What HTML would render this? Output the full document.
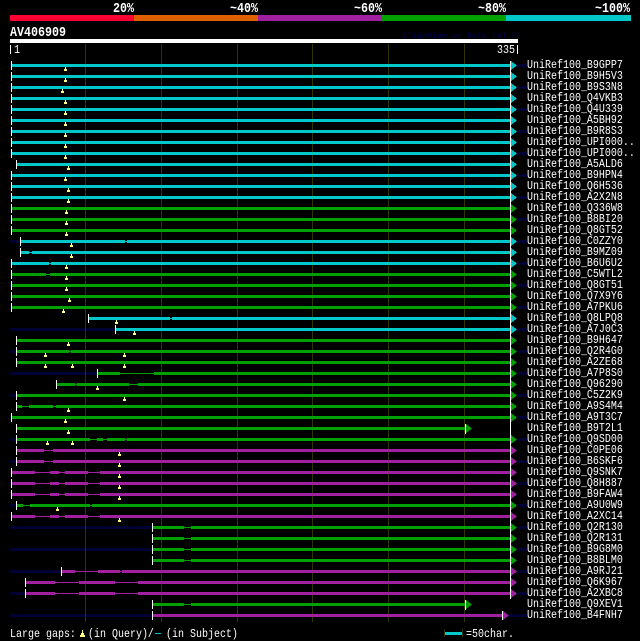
<!DOCTYPE html>
<html><head><meta charset="utf-8"><style>
html,body{margin:0;padding:0;background:#000;width:640px;height:641px;overflow:hidden}
svg{display:block}
text{font-family:"Liberation Mono",monospace;fill:#fff;white-space:pre}
.l{font-size:10px}
.h{font-size:11.67px;font-weight:bold;text-anchor:end}
path{fill:none}
.t{shape-rendering:crispEdges}
rect{shape-rendering:crispEdges}
</style></head><body>
<svg xmlns="http://www.w3.org/2000/svg" width="640" height="641" viewBox="0 0 640 641">
<defs><path id="m" style="fill:#ffff80;stroke:none" d="M-1 5h3v2h-3zM0 3h1v2h-1z"/></defs>
<rect width="640" height="641" fill="#000"/>
<rect x="10" y="15" width="124" height="6" fill="#ff0033"/>
<rect x="134" y="15" width="124" height="6" fill="#e06000"/>
<rect x="258" y="15" width="124" height="6" fill="#a020a0"/>
<rect x="382" y="15" width="124" height="6" fill="#00a000"/>
<rect x="506" y="15" width="125" height="6" fill="#00c8c8"/>
<text class="h" transform="translate(134 12) scale(1 1.17)">20%</text>
<text class="h" transform="translate(258 12) scale(1 1.17)">~40%</text>
<text class="h" transform="translate(382 12) scale(1 1.17)">~60%</text>
<text class="h" transform="translate(506 12) scale(1 1.17)">~80%</text>
<text class="h" transform="translate(630 12) scale(1 1.17)">~100%</text>
<text transform="translate(10 36) scale(1 1.17)" style="font-size:11.67px;font-weight:bold">AV406909</text>
<text x="402" y="38" style="font-size:8.33px;font-weight:bold;fill:#000040">AlignView.pm Beta rel.7</text>
<rect x="10" y="39" width="508" height="4" fill="#fff"/>
<rect x="10" y="45" width="1" height="9" fill="#fff"/>
<rect x="517" y="45" width="1" height="9" fill="#fff"/>
<text class="l" transform="translate(14 53) scale(1 1.2)">1</text>
<text class="l" transform="translate(497 53) scale(1 1.2)">335</text>
<path stroke="#000033" stroke-width="3" d="M10 65.5H11M517 65.500H527M10 87.500H11M517 87.500H527M10 109.500H11M517 109.500H527M10 131.500H11M517 131.500H527M10 153.500H11M517 153.500H527M10 175.500H11M517 175.500H527M10 197.500H11M517 197.500H527M10 219.500H11M517 219.500H527M10 241.500H20M517 241.500H527M10 263.500H11M517 263.500H527M10 285.500H11M517 285.500H527M10 307.500H11M517 307.500H527M10 329.500H115M517 329.500H527M10 351.500H16M517 351.500H527M10 373.500H97M517 373.500H527M10 395.500H16M517 395.500H527M10 417.500H11M517 417.500H527M10 439.500H16M517 439.500H527M10 461.500H16M517 461.500H527M10 483.500H11M517 483.500H527M10 505.500H16M517 505.500H527M10 527.500H152M517 527.500H527M10 549.500H152M517 549.500H527M10 571.500H61M517 571.500H527M10 593.500H25M517 593.500H527M10 615.500H152M508 615.500H527"/>
<path stroke="#333300" stroke-width="1" d="M85.5 44V622M161.5 44V622M237.5 44V622M312.5 44V622M388.5 44V622M464.5 44V622"/>
<path stroke="#00c8c8" stroke-width="3" d="M12 65.5H511M12 76.5H511M12 87.5H511M12 98.5H511M12 109.5H511M12 120.5H511M12 131.5H511M12 142.5H511M12 153.5H511M17 164.5H511M12 175.5H511M12 186.5H511M12 197.5H511M21 241.5H125M127 241.5H511M21 252.5H29M32 252.5H511M12 263.5H49M51 263.5H511M89 318.5H170M172 318.5H511M116 329.5H511"/>
<path stroke="#00c8c8" stroke-width="1" d="M125 241.5H127M29 252.5H32M49 263.5H51M170 318.5H172"/>
<path stroke="#00a000" stroke-width="3" d="M12 208.5H511M12 219.5H511M12 230.5H511M12 274.5H46M50 274.5H511M12 285.5H511M12 296.5H511M12 307.5H511M17 340.5H511M17 351.5H69M71 351.5H511M17 362.5H511M98 373.5H120M154 373.5H511M57 384.5H75M77 384.5H129M138 384.5H511M17 395.5H511M17 406.5H22M29 406.5H53M56 406.5H511M12 417.5H511M17 428.5H466M17 439.5H90M97 439.5H103M107 439.5H125M127 439.5H511M17 505.5H23M30 505.5H90M92 505.5H511M153 527.5H184M191 527.5H511M153 538.5H184M191 538.5H511M153 549.5H184M191 549.5H511M153 560.5H184M191 560.5H511M153 604.5H184M191 604.5H466"/>
<path stroke="#00a000" stroke-width="1" d="M46 274.5H50M69 351.5H71M120 373.5H154M75 384.5H77M129 384.5H138M22 406.5H29M53 406.5H56M90 439.5H97M103 439.5H107M125 439.5H127M23 505.5H30M90 505.5H92M184 527.5H191M184 538.5H191M184 549.5H191M184 560.5H191M184 604.5H191"/>
<path stroke="#a020a0" stroke-width="3" d="M17 450.5H44M53 450.5H511M17 461.5H44M53 461.5H511M12 472.5H35M50 472.5H59M65 472.5H88M100 472.5H511M12 483.5H35M50 483.5H59M65 483.5H88M100 483.5H511M12 494.5H35M50 494.5H59M65 494.5H88M100 494.5H511M12 516.5H35M50 516.5H59M65 516.5H88M100 516.5H511M62 571.5H75M98 571.5H120M122 571.5H511M26 582.5H55M79 582.5H115M138 582.5H511M26 593.5H55M79 593.5H115M138 593.5H511M153 615.5H502"/>
<path stroke="#a020a0" stroke-width="1" d="M44 450.5H53M44 461.5H53M35 472.5H50M59 472.5H65M88 472.5H100M35 483.5H50M59 483.5H65M88 483.5H100M35 494.5H50M59 494.5H65M88 494.5H100M35 516.5H50M59 516.5H65M88 516.5H100M75 571.5H98M120 571.5H122M55 582.5H79M115 582.5H138M55 593.5H79M115 593.5H138"/>
<path stroke="#fff" stroke-width="1" d="M11.5 61v9M11.5 72v9M11.5 83v9M11.5 94v9M11.5 105v9M11.5 116v9M11.5 127v9M11.5 138v9M11.5 149v9M16.5 160v9M11.5 171v9M11.5 182v9M11.5 193v9M11.5 204v9M11.5 215v9M11.5 226v9M20.5 237v9M20.5 248v9M11.5 259v9M11.5 270v9M11.5 281v9M11.5 292v9M11.5 303v9M88.5 314v9M115.5 325v9M16.5 336v9M16.5 347v9M16.5 358v9M97.5 369v9M56.5 380v9M16.5 391v9M16.5 402v9M11.5 413v9M16.5 424v9M16.5 435v9M16.5 446v9M16.5 457v9M11.5 468v9M11.5 479v9M11.5 490v9M16.5 501v9M11.5 512v9M152.5 523v9M152.5 534v9M152.5 545v9M152.5 556v9M61.5 567v9M25.5 578v9M25.5 589v9M152.5 600v9M152.5 611v9M510.5 61V599M465.5 424v10M465.5 600v10M502.5 611v9"/>
<path class="t" style="fill:#00c8c8" d="M511 61l6 4.500-6 4.500zM511 72l6 4.500-6 4.500zM511 83l6 4.500-6 4.500zM511 94l6 4.500-6 4.500zM511 105l6 4.500-6 4.500zM511 116l6 4.500-6 4.500zM511 127l6 4.500-6 4.500zM511 138l6 4.500-6 4.500zM511 149l6 4.500-6 4.500zM511 160l6 4.500-6 4.500zM511 171l6 4.500-6 4.500zM511 182l6 4.500-6 4.500zM511 193l6 4.500-6 4.500zM511 237l6 4.500-6 4.500zM511 248l6 4.500-6 4.500zM511 259l6 4.500-6 4.500zM511 314l6 4.500-6 4.500zM511 325l6 4.500-6 4.500z"/>
<path class="t" style="fill:#00a000" d="M511 204l6 4.500-6 4.500zM511 215l6 4.500-6 4.500zM511 226l6 4.500-6 4.500zM511 270l6 4.500-6 4.500zM511 281l6 4.500-6 4.500zM511 292l6 4.500-6 4.500zM511 303l6 4.500-6 4.500zM511 336l6 4.500-6 4.500zM511 347l6 4.500-6 4.500zM511 358l6 4.500-6 4.500zM511 369l6 4.500-6 4.500zM511 380l6 4.500-6 4.500zM511 391l6 4.500-6 4.500zM511 402l6 4.500-6 4.500zM511 413l6 4.500-6 4.500zM466 424l6 4.500-6 4.500zM511 435l6 4.500-6 4.500zM511 501l6 4.500-6 4.500zM511 523l6 4.500-6 4.500zM511 534l6 4.500-6 4.500zM511 545l6 4.500-6 4.500zM511 556l6 4.500-6 4.500zM466 600l6 4.500-6 4.500z"/>
<path class="t" style="fill:#a020a0" d="M511 446l6 4.500-6 4.500zM511 457l6 4.500-6 4.500zM511 468l6 4.500-6 4.500zM511 479l6 4.500-6 4.500zM511 490l6 4.500-6 4.500zM511 512l6 4.500-6 4.500zM511 567l6 4.500-6 4.500zM511 578l6 4.500-6 4.500zM511 589l6 4.500-6 4.500zM503 611l6 4.500-6 4.500z"/>
<use href="#m" x="65" y="64"/><use href="#m" x="65" y="75"/><use href="#m" x="62" y="86"/><use href="#m" x="65" y="97"/><use href="#m" x="65" y="108"/><use href="#m" x="65" y="119"/><use href="#m" x="65" y="130"/><use href="#m" x="65" y="141"/><use href="#m" x="65" y="152"/><use href="#m" x="68" y="163"/><use href="#m" x="65" y="174"/><use href="#m" x="68" y="185"/><use href="#m" x="68" y="196"/><use href="#m" x="66" y="207"/><use href="#m" x="66" y="218"/><use href="#m" x="66" y="229"/><use href="#m" x="71" y="240"/><use href="#m" x="71" y="251"/><use href="#m" x="66" y="262"/><use href="#m" x="66" y="273"/><use href="#m" x="66" y="284"/><use href="#m" x="69" y="295"/><use href="#m" x="63" y="306"/><use href="#m" x="116" y="317"/><use href="#m" x="134" y="328"/><use href="#m" x="68" y="339"/><use href="#m" x="45" y="350"/><use href="#m" x="124" y="350"/><use href="#m" x="45" y="361"/><use href="#m" x="72" y="361"/><use href="#m" x="124" y="361"/><use href="#m" x="97" y="383"/><use href="#m" x="124" y="394"/><use href="#m" x="68" y="405"/><use href="#m" x="65" y="416"/><use href="#m" x="68" y="427"/><use href="#m" x="47" y="438"/><use href="#m" x="72" y="438"/><use href="#m" x="119" y="449"/><use href="#m" x="119" y="460"/><use href="#m" x="119" y="471"/><use href="#m" x="119" y="482"/><use href="#m" x="119" y="493"/><use href="#m" x="57" y="504"/><use href="#m" x="119" y="515"/>
<text class="l" transform="translate(527 68) scale(1 1.2)">UniRef100_B9GPP7</text>
<text class="l" transform="translate(527 79) scale(1 1.2)">UniRef100_B9H5V3</text>
<text class="l" transform="translate(527 90) scale(1 1.2)">UniRef100_B9S3N8</text>
<text class="l" transform="translate(527 101) scale(1 1.2)">UniRef100_Q4VKB3</text>
<text class="l" transform="translate(527 112) scale(1 1.2)">UniRef100_Q4U339</text>
<text class="l" transform="translate(527 123) scale(1 1.2)">UniRef100_A5BH92</text>
<text class="l" transform="translate(527 134) scale(1 1.2)">UniRef100_B9R8S3</text>
<text class="l" transform="translate(527 145) scale(1 1.2)">UniRef100_UPI000..</text>
<text class="l" transform="translate(527 156) scale(1 1.2)">UniRef100_UPI000..</text>
<text class="l" transform="translate(527 167) scale(1 1.2)">UniRef100_A5ALD6</text>
<text class="l" transform="translate(527 178) scale(1 1.2)">UniRef100_B9HPN4</text>
<text class="l" transform="translate(527 189) scale(1 1.2)">UniRef100_Q6H536</text>
<text class="l" transform="translate(527 200) scale(1 1.2)">UniRef100_A2X2N8</text>
<text class="l" transform="translate(527 211) scale(1 1.2)">UniRef100_Q336W8</text>
<text class="l" transform="translate(527 222) scale(1 1.2)">UniRef100_B8BI20</text>
<text class="l" transform="translate(527 233) scale(1 1.2)">UniRef100_Q8GT52</text>
<text class="l" transform="translate(527 244) scale(1 1.2)">UniRef100_C0ZZY0</text>
<text class="l" transform="translate(527 255) scale(1 1.2)">UniRef100_B9MZ09</text>
<text class="l" transform="translate(527 266) scale(1 1.2)">UniRef100_B6U6U2</text>
<text class="l" transform="translate(527 277) scale(1 1.2)">UniRef100_C5WTL2</text>
<text class="l" transform="translate(527 288) scale(1 1.2)">UniRef100_Q8GT51</text>
<text class="l" transform="translate(527 299) scale(1 1.2)">UniRef100_Q7X9Y6</text>
<text class="l" transform="translate(527 310) scale(1 1.2)">UniRef100_A7PKU6</text>
<text class="l" transform="translate(527 321) scale(1 1.2)">UniRef100_Q8LPQ8</text>
<text class="l" transform="translate(527 332) scale(1 1.2)">UniRef100_A7J0C3</text>
<text class="l" transform="translate(527 343) scale(1 1.2)">UniRef100_B9H647</text>
<text class="l" transform="translate(527 354) scale(1 1.2)">UniRef100_Q2R4G0</text>
<text class="l" transform="translate(527 365) scale(1 1.2)">UniRef100_A2ZE68</text>
<text class="l" transform="translate(527 376) scale(1 1.2)">UniRef100_A7P8S0</text>
<text class="l" transform="translate(527 387) scale(1 1.2)">UniRef100_Q96290</text>
<text class="l" transform="translate(527 398) scale(1 1.2)">UniRef100_C5Z2K9</text>
<text class="l" transform="translate(527 409) scale(1 1.2)">UniRef100_A9S4M4</text>
<text class="l" transform="translate(527 420) scale(1 1.2)">UniRef100_A9T3C7</text>
<text class="l" transform="translate(527 431) scale(1 1.2)">UniRef100_B9T2L1</text>
<text class="l" transform="translate(527 442) scale(1 1.2)">UniRef100_Q9SD00</text>
<text class="l" transform="translate(527 453) scale(1 1.2)">UniRef100_C0PE06</text>
<text class="l" transform="translate(527 464) scale(1 1.2)">UniRef100_B6SKF6</text>
<text class="l" transform="translate(527 475) scale(1 1.2)">UniRef100_Q9SNK7</text>
<text class="l" transform="translate(527 486) scale(1 1.2)">UniRef100_Q8H887</text>
<text class="l" transform="translate(527 497) scale(1 1.2)">UniRef100_B9FAW4</text>
<text class="l" transform="translate(527 508) scale(1 1.2)">UniRef100_A9U0W9</text>
<text class="l" transform="translate(527 519) scale(1 1.2)">UniRef100_A2XC14</text>
<text class="l" transform="translate(527 530) scale(1 1.2)">UniRef100_Q2R130</text>
<text class="l" transform="translate(527 541) scale(1 1.2)">UniRef100_Q2R131</text>
<text class="l" transform="translate(527 552) scale(1 1.2)">UniRef100_B9G8M0</text>
<text class="l" transform="translate(527 563) scale(1 1.2)">UniRef100_B8BLM0</text>
<text class="l" transform="translate(527 574) scale(1 1.2)">UniRef100_A9RJ21</text>
<text class="l" transform="translate(527 585) scale(1 1.2)">UniRef100_Q6K967</text>
<text class="l" transform="translate(527 596) scale(1 1.2)">UniRef100_A2XBC8</text>
<text class="l" transform="translate(527 607) scale(1 1.2)">UniRef100_Q9XEV1</text>
<text class="l" transform="translate(527 618) scale(1 1.2)">UniRef100_B4FNH7</text>
<text class="l" transform="translate(10 637) scale(1 1.2)">Large gaps:</text>
<rect x="82" y="630" width="1" height="3" fill="#ffff80"/><rect x="81" y="633" width="3" height="2" fill="#ffff80"/><rect x="80" y="635" width="5" height="2" fill="#ffff80"/>
<text class="l" transform="translate(88 637) scale(1 1.2)">(in Query)/</text>
<rect x="155" y="633" width="6" height="1" fill="#00c8c8"/>
<text class="l" transform="translate(166 637) scale(1 1.2)">(in Subject)</text>
<rect x="444" y="629" width="1" height="8" fill="#333300"/><rect x="462" y="629" width="1" height="8" fill="#333300"/>
<rect x="445" y="632" width="17" height="3" fill="#00c8c8"/>
<text class="l" transform="translate(466 637) scale(1 1.2)">=50char.</text>
</svg>
</body></html>
